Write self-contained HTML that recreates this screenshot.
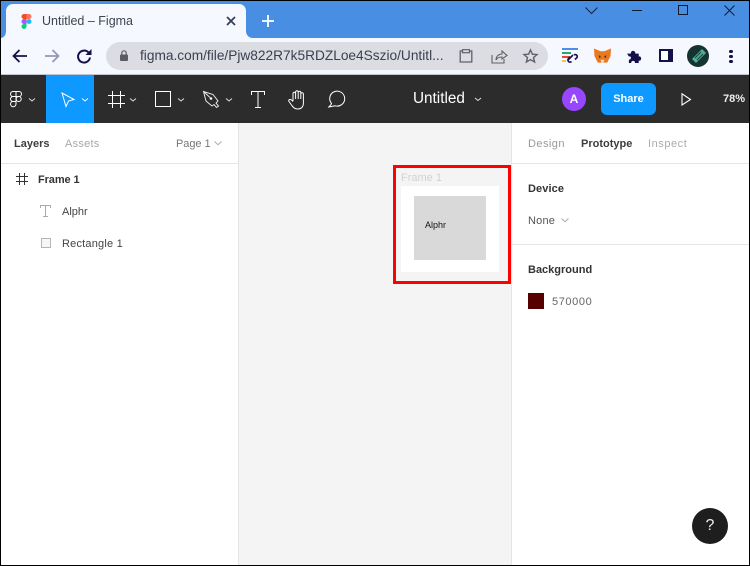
<!DOCTYPE html>
<html><head><meta charset="utf-8"><style>
html,body{margin:0;padding:0}
body{width:750px;height:566px;position:relative;overflow:hidden;background:#fff;font-family:"Liberation Sans",sans-serif}
.a{position:absolute}
.t{position:absolute;white-space:nowrap;font-size:11px;line-height:14px}
svg{position:absolute;overflow:visible}
</style></head><body>
<div class="a" style="left:0;top:0;width:750px;height:38px;background:#488fe3"></div>
<div class="a" style="left:0;top:38px;width:750px;height:36px;background:#f5f8fe"></div>
<div class="a" style="left:0;top:74px;width:750px;height:1px;background:#c2c3d0"></div>
<svg style="left:0;top:0" width="750" height="40"><path d="M0 38C4 38 6 35 6 31V11C6 7 9 4 13 4H239C243 4 246 7 246 11V31C246 35 249 38 253 38Z" fill="#f5f8fe"/></svg>
<svg style="left:21px;top:14px" width="11" height="15" viewBox="1 0 10 15"><path d="M1 2.500a2.500 2.500 0 0 1 2.500-2.500H6v5H3.500A2.500 2.500 0 0 1 1 2.500z" fill="#f24e1e"/><path d="M6 0h2.500a2.500 2.500 0 0 1 0 5H6z" fill="#ff7262"/><path d="M1 7.500A2.500 2.500 0 0 1 3.500 5H6v5H3.500A2.500 2.500 0 0 1 1 7.500z" fill="#a259ff"/><circle cx="8.500" cy="7.500" r="2.500" fill="#1abcfe"/><path d="M1 12.500A2.500 2.500 0 0 1 3.500 10H6v2.500a2.500 2.500 0 0 1-5 0z" fill="#0acf83"/></svg>
<div class="t" style="left:42px;top:13px;font-size:12.500px;line-height:16px;color:#3e4452">Untitled – Figma</div>
<svg style="left:226px;top:16px" width="10" height="10"><path d="M1 1L9 9M9 1L1 9" stroke="#354059" stroke-width="1.800"/></svg>
<svg style="left:262px;top:15px" width="12" height="12"><path d="M6 0V12M0 6H12" stroke="#fff" stroke-width="1.800"/></svg>
<svg style="left:585px;top:6px" width="14" height="10"><path d="M.5 1.500L6.500 7.500L12.500 1.500" fill="none" stroke="#15233f" stroke-width="1"/></svg>
<div class="a" style="left:632px;top:10px;width:10px;height:1px;background:#111b2e"></div>
<div class="a" style="left:678px;top:5px;width:8px;height:8px;border:1px solid #111b2e"></div>
<svg style="left:724px;top:5px" width="11" height="11"><path d="M.5 .5L10.500 10.500M10.500 .5L.5 10.500" stroke="#111b2e" stroke-width="1"/></svg>

<svg style="left:12px;top:48px" width="16" height="16"><path d="M15 8H2M7.500 2L1.500 8L7.500 14" fill="none" stroke="#15104a" stroke-width="1.800"/></svg>
<svg style="left:44px;top:48px" width="16" height="16"><path d="M1 8H14M8.500 2L14.500 8L8.500 14" fill="none" stroke="#9896b6" stroke-width="1.800"/></svg>
<svg style="left:77px;top:49px" width="16" height="15"><path d="M13 8.500A6 6 0 1 1 11.500 3.500" fill="none" stroke="#15104a" stroke-width="2"/><path d="M8.500 6H14.500V0Z" fill="#15104a"/></svg>
<div class="a" style="left:106px;top:42px;width:442px;height:28px;border-radius:14px;background:#dcdde2"></div>
<svg style="left:120px;top:50px" width="8" height="11"><rect x="0" y="4.500" width="8" height="6.500" rx="1" fill="#5a5c63"/><path d="M1.800 4.500V3a2.200 2.200 0 0 1 4.400 0V4.500" fill="none" stroke="#5a5c63" stroke-width="1.200"/></svg>
<div class="t" style="left:140px;top:47px;font-size:13.700px;line-height:18px;color:#3a4050">figma.com/file/Pjw822R7k5RDZLoe4Sszio/Untitl...</div>
<svg style="left:459px;top:49px" width="14" height="14"><path d="M3.500 2H1.200V13H12.800V2H10.500" fill="none" stroke="#5f6168" stroke-width="1.300"/><rect x="3.500" y="0.700" width="7" height="3" fill="none" stroke="#5f6168" stroke-width="1.200"/></svg>
<svg style="left:491px;top:49px" width="16" height="15"><path d="M1 6V14H13V10" fill="none" stroke="#5f6168" stroke-width="1.100"/><path d="M5 11C5 7 8 5 11 5V2L16 6.500L11 10V8C8 8 6 9 5 11Z" fill="none" stroke="#5f6168" stroke-width="1.100"/></svg>
<svg style="left:523px;top:49px" width="15" height="14"><path d="M7.500 1L9.400 5.200L14 5.600L10.500 8.600L11.600 13L7.500 10.700L3.400 13L4.500 8.600L1 5.600L5.600 5.200Z" fill="none" stroke="#5f6168" stroke-width="1.400"/></svg>

<div class="a" style="left:562px;top:48px;width:16px;height:2px;background:#4a8fe8"></div>
<div class="a" style="left:562px;top:52px;width:9px;height:2px;background:#2ea66a"></div>
<div class="a" style="left:562px;top:56px;width:8px;height:2px;background:#e0483e"></div>
<div class="a" style="left:562px;top:60px;width:4px;height:2px;background:#f6c343"></div>
<svg style="left:566px;top:52px" width="14" height="12"><path d="M2 8L7 3M5.500 9.500A2 2 0 0 1 2.500 6.500L4 5M8 3A2 2 0 0 1 11 5.500L9 7.500" fill="none" stroke="#15104a" stroke-width="1.600"/></svg>
<svg style="left:594px;top:48px" width="17" height="16" viewBox="0 0 18 16"><path d="M0 0L7 3H11L18 0L17.500 8L14 15H4L.5 8Z" fill="#e8791f"/><path d="M5 7L7.500 9L5.500 10ZM13 7L10.500 9L12.500 10Z" fill="#3b2a20"/><path d="M7 12H11L10 15H8Z" fill="#f2dcc8"/></svg>
<svg style="left:627px;top:49px" width="15" height="14" viewBox="0 0 16 15"><path d="M0 5H4C4 1 9 1 9 5H12.500V8C16 7.500 16 13 12.500 12.500V15H8.500C9 12 4 12 4.500 15H2V11.500C5 11 5 7.500 2 8Z" fill="#15104a"/></svg>
<div class="a" style="left:659px;top:49px;width:7px;height:9px;border:2px solid #15104a;border-right:5px solid #15104a;background:#fff"></div>
<svg style="left:687px;top:45px" width="22" height="22"><circle cx="11" cy="11" r="11" fill="#16332f"/><path d="M5 14L15 4L19 8L9 18Z" fill="#4fae96"/><path d="M8 13L14 7M10 15L16 9" stroke="#1d4a42" stroke-width="1.200"/></svg>
<div class="a" style="left:729px;top:50px;width:4px;height:3px;border-radius:2px;background:#15104a"></div>
<div class="a" style="left:729px;top:55px;width:4px;height:3px;border-radius:2px;background:#15104a"></div>
<div class="a" style="left:729px;top:60px;width:4px;height:3px;border-radius:2px;background:#15104a"></div>

<div class="a" style="left:0;top:75px;width:750px;height:48px;background:#2c2c2c"></div>
<div class="a" style="left:46px;top:75px;width:48px;height:48px;background:#0d99ff"></div>
<svg style="left:10px;top:91px" width="13" height="16" fill="none" stroke="#fff" stroke-width="1"><path d="M.5 3a2.500 2.500 0 0 1 2.500-2.500H6V5.500H3A2.500 2.500 0 0 1 .5 3zM6 .5H9a2.500 2.500 0 0 1 0 5H6zM.5 8A2.500 2.500 0 0 1 3 5.500H6v5H3A2.500 2.500 0 0 1 .5 8z"/><circle cx="8.700" cy="8" r="2.500"/><path d="M.5 13A2.500 2.500 0 0 1 3 10.500H6V13a2.750 2.750 0 0 1-5.500 0z"/></svg>
<svg style="left:61px;top:92px" width="14" height="15"><path d="M1 1L13 7.500L7.500 9L5 14.500Z" fill="none" stroke="#fff" stroke-width="1"/></svg>
<svg style="left:108px;top:91px" width="17" height="17"><path d="M4.500 0V17M12.500 0V17M0 4.500H17M0 12.500H17" stroke="#fff" stroke-width="1"/></svg>
<div class="a" style="left:155px;top:91px;width:14px;height:14px;border:1px solid #fff"></div>
<svg style="left:203px;top:91px" width="17" height="17"><path d="M.5 .5L10 3.500L15 10L13 12L15.500 15L13.500 16.500L11 13.500L9 15L3 10Z" fill="none" stroke="#e8e8e8" stroke-width="1"/><circle cx="8" cy="7.500" r="1.300" fill="#fff"/><path d="M1 1L7 6.500" stroke="#e8e8e8"/></svg>
<svg style="left:251px;top:91px" width="14" height="17"><path d="M.5 4V.5H13.500V4M7 .5V16.500M4 16.500H10" fill="none" stroke="#fff" stroke-width="1"/></svg>
<svg style="left:288px;top:89px" width="19" height="21"><path d="M5 12V4.500a1.300 1.300 0 0 1 2.600 0V3a1.300 1.300 0 0 1 2.600 0V3.500a1.300 1.300 0 0 1 2.600 0V5a1.300 1.300 0 0 1 2.600 0V14C15.400 18 13 20 10 20C6 20 5 18 3.500 16L1 12.500C0 11 2 9.500 3.500 11L5 12.500M7.600 4.500V10M10.200 3.500V10M12.800 5V10" fill="none" stroke="#fff" stroke-width="1"/></svg>
<svg style="left:328px;top:90px" width="19" height="18"><path d="M3.500 13.500A7.500 7.500 0 1 1 7 15.800L.8 17C1.500 16 3.200 15 3.500 13.500Z" fill="none" stroke="#fff" stroke-width="1"/></svg>
<svg style="left:0;top:0;pointer-events:none" width="750" height="566"><g fill="none" stroke="#fff" stroke-width="1"><path d="M29 98.500L32 101L35 98.500" stroke="#ddd"/><path d="M82 98.500L85 101L88 98.500"/><path d="M130 98.500L133 101L136 98.500" stroke="#ddd"/><path d="M178 98.500L181 101L184 98.500" stroke="#ddd"/><path d="M226 98.500L229 101L232 98.500" stroke="#ddd"/><path d="M475 98L478 100.500L481 98" stroke="#ddd"/></g></svg>
<div class="t" style="left:413px;top:90px;font-size:15.300px;line-height:18px;color:#fff">Untitled</div>
<div class="a" style="left:562px;top:87px;width:24px;height:24px;border-radius:50%;background:#9747ff"></div>
<div class="t" style="left:562px;top:92px;width:24px;text-align:center;font-size:12px;color:#fff;font-weight:bold">A</div>
<div class="a" style="left:601px;top:83px;width:55px;height:32px;border-radius:6px;background:#0d99ff"></div>
<div class="t" style="left:601px;top:92px;width:55px;text-align:center;font-weight:bold;color:#fff">Share</div>
<svg style="left:681px;top:93px" width="11" height="13"><path d="M1 .8V12L9.500 6.500Z" fill="none" stroke="#fff" stroke-width="1.100"/></svg>
<div class="t" style="left:723px;top:92px;font-weight:bold;color:#eee">78%</div>

<div class="a" style="left:238px;top:123px;width:274px;height:443px;background:#f4f4f4"></div>
<div class="a" style="left:238px;top:123px;width:1px;height:443px;background:#e5e5e5"></div>
<div class="a" style="left:511px;top:123px;width:1px;height:443px;background:#e5e5e5"></div>
<div class="a" style="left:1px;top:163px;width:237px;height:1px;background:#e5e5e5"></div>
<div class="a" style="left:512px;top:163px;width:238px;height:1px;background:#e5e5e5"></div>
<div class="a" style="left:512px;top:244px;width:238px;height:1px;background:#e5e5e5"></div>

<div class="t" style="left:14px;top:137px;font-weight:bold;color:#3d3d3d">Layers</div>
<div class="t" style="left:65px;top:137px;color:#a8a8a8;letter-spacing:.25px">Assets</div>
<div class="t" style="left:176px;top:137px;color:#777;letter-spacing:-.05px">Page 1</div>
<svg style="left:214px;top:141px" width="8" height="5"><path d="M.5 .5L4 3.700L7.500 .5" fill="none" stroke="#aaa"/></svg>
<svg style="left:16px;top:173px" width="12" height="12"><path d="M3.500 0V12M8.500 0V12M0 3.500H12M0 8.500H12" stroke="#333" stroke-width="1"/></svg>
<div class="t" style="left:38px;top:173px;font-weight:bold;color:#333;letter-spacing:-.1px">Frame 1</div>
<svg style="left:40px;top:205px" width="11" height="12"><path d="M.5 3V.5H10.500V3M5.500 .5V11.500M3 11.500H8" fill="none" stroke="#aaa"/></svg>
<div class="t" style="left:62px;top:205px;color:#444">Alphr</div>
<div class="a" style="left:41px;top:238px;width:8px;height:8px;border:1px solid #b5b5b5;background:#f6f6f6"></div>
<div class="t" style="left:62px;top:237px;color:#444;letter-spacing:.2px">Rectangle 1</div>

<div class="t" style="left:401px;top:171px;color:#d2d2d2;letter-spacing:0">Frame 1</div>
<div class="a" style="left:401px;top:186px;width:98px;height:86px;background:#fff"></div>
<div class="a" style="left:414px;top:196px;width:72px;height:64px;background:#d9d9d9"></div>
<div class="t" style="left:425px;top:218px;font-size:9px;color:#111">Alphr</div>
<div class="a" style="left:393px;top:165px;width:112px;height:113px;border:3px solid #f00"></div>

<div class="t" style="left:528px;top:137px;color:#999;letter-spacing:.45px">Design</div>
<div class="t" style="left:581px;top:137px;font-weight:bold;color:#3d3d3d">Prototype</div>
<div class="t" style="left:648px;top:137px;color:#aaa;letter-spacing:.55px">Inspect</div>
<div class="t" style="left:528px;top:182px;font-weight:bold;color:#333;letter-spacing:.1px">Device</div>
<div class="t" style="left:528px;top:214px;color:#555;letter-spacing:.2px">None</div>
<svg style="left:561px;top:218px" width="8" height="5"><path d="M.5 .5L4 3.700L7.500 .5" fill="none" stroke="#aaa"/></svg>
<div class="t" style="left:528px;top:263px;font-weight:bold;color:#333">Background</div>
<div class="a" style="left:528px;top:293px;width:16px;height:16px;background:#570000"></div>
<div class="t" style="left:552px;top:295px;color:#666;letter-spacing:.6px">570000</div>

<div class="a" style="left:692px;top:508px;width:36px;height:36px;border-radius:50%;background:#1e1e1e"></div>
<div class="t" style="left:692px;top:516px;width:36px;text-align:center;font-size:16px;line-height:20px;color:#eee">?</div>

<div class="a" style="left:0;top:0;width:750px;height:1px;background:#000"></div>
<div class="a" style="left:0;top:0;width:1px;height:566px;background:#000"></div>
<div class="a" style="left:749px;top:0;width:1px;height:566px;background:#000"></div>
<div class="a" style="left:0;top:565px;width:750px;height:1px;background:#000"></div>
</body></html>
